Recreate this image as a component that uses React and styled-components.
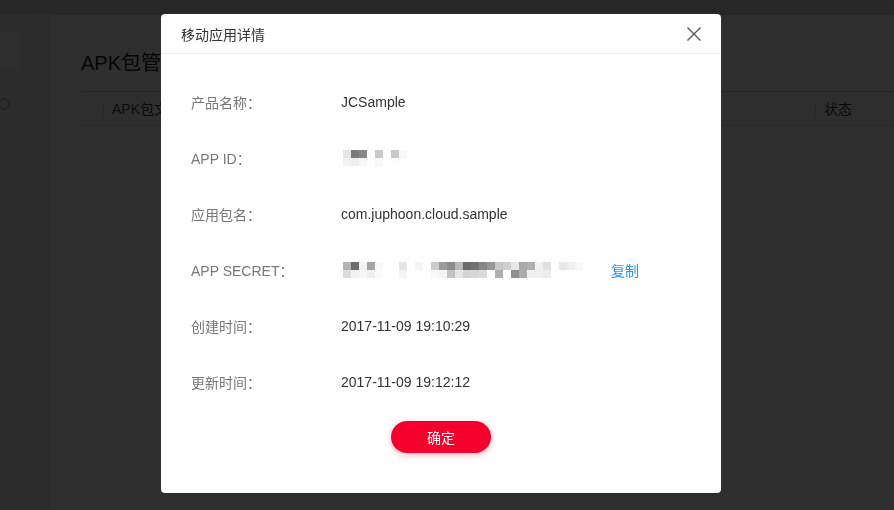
import React from "react";
import styled, { createGlobalStyle } from "styled-components";

const GlobalStyle = createGlobalStyle`
  html, body {
    margin: 0;
    padding: 0;
    background: #fff;
    font-family: "Liberation Sans", "Noto Sans CJK SC", sans-serif;
  }
`;

const Page = styled.div`
  width: 894px;
  height: 510px;
  display: flex;
  flex-direction: column;
  overflow: hidden;
`;

const TopBar = styled.div`
  height: 15px;
  background: #d6d6d6;
`;

const Main = styled.div`
  flex: 1;
  display: flex;
`;

const Sidebar = styled.div`
  width: 31px;
  background: #f4f4f4;
  padding-top: 17px;
  display: flex;
  flex-direction: column;
  gap: 28px;
`;

const SideBox = styled.div`
  width: 20px;
  height: 38px;
  background: #fdfdfd;
  border-radius: 0 3px 3px 0;
`;

const SideIcon = styled.div`
  width: 8px;
  height: 8px;
  margin-left: -2px;
  border: 2px solid #c8c8c8;
  border-radius: 50%;
`;

const Gutter = styled.div`
  width: 20px;
  background: #ebebeb;
`;

const Card = styled.div`
  flex: 1;
  margin-top: 2px;
  background: #fff;
  padding: 36px 0 0 30px;
`;

const Title = styled.h1`
  margin: 0 0 18px;
  font-size: 20px;
  font-weight: normal;
  color: #222;
  line-height: 20px;
`;

const TableHead = styled.div`
  height: 33px;
  border-top: 1px solid #cfcfcf;
  border-bottom: 1px solid #e4e4e4;
  display: flex;
  align-items: center;
  font-size: 14px;
  color: #444;
`;

const HeadCell = styled.div`
  flex: ${(p) => (p.$grow ? 1 : "none")};
  width: ${(p) => p.$width || "auto"};
  padding-left: 8px;
  border-left: 1px solid #ddd;
  margin-left: ${(p) => p.$offset || "0"};
  line-height: 14px;
`;

const Overlay = styled.div`
  position: fixed;
  inset: 0;
  background: rgba(0, 0, 0, 0.82);
  padding: 14px 0 0 161px;
`;

const Modal = styled.div`
  width: 560px;
  background: #fff;
  border-radius: 4px;
  overflow: hidden;
`;

const Header = styled.div`
  height: 39px;
  border-bottom: 1px solid #ececec;
  display: flex;
  align-items: center;
  justify-content: space-between;
  padding: 0 20px;
`;

const HeaderTitle = styled.div`
  font-size: 14px;
  color: #333;
`;

const CloseButton = styled.button`
  border: none;
  background: none;
  padding: 0;
  margin-right: -1px;
  width: 16px;
  height: 16px;
  display: flex;
  cursor: pointer;
`;

const Body = styled.div`
  padding: 20px 30px 40px;
  display: flex;
  flex-direction: column;
`;

const Row = styled.div`
  height: 56px;
  display: flex;
  align-items: center;
  font-size: 14px;
`;

const Label = styled.div`
  width: 150px;
  color: #777;
`;

const Value = styled.div`
  color: #333;
  display: flex;
  align-items: center;
`;

const CopyLink = styled.a`
  margin-left: 28px;
  color: #1c9af2;
  cursor: pointer;
`;

const Footer = styled.div`
  margin-top: 11px;
  display: flex;
  justify-content: center;
`;

const ConfirmButton = styled.button`
  width: 100px;
  height: 32px;
  border: none;
  border-radius: 16px;
  background: #f5002c;
  color: #fff;
  font-family: inherit;
  font-size: 14px;
  box-shadow: 0 2px 6px rgba(245, 0, 44, 0.3);
  cursor: pointer;
`;

const idCells = [
  ["#e6e6e6", "#7a7a7a", "#888888", "#fff", "#c8c8c8", "#fff", "#c8c8c8", "#f8f8f8"],
  ["#f2f2f2", "#eeeeee", "#f6f6f6", "#fff", "#f8f8f8", "#fff", "#fdfdfd", "#fff"],
];

const secretCells = [
  [
    "#b4b4b4", "#6e6e6e", "#f2f2f2", "#a4a4a4", "#f8f8f8", "#fff", "#fff", "#e6e6e6",
    "#fff", "#f4f4f4", "#fff", "#cccccc", "#9c9c9c", "#8c8c8c", "#b8b8b8", "#6a6a6a",
    "#727272", "#888888", "#969696", "#c8c8c8", "#d0d0d0", "#e8e8e8", "#aaaaaa", "#b0b0b0",
    "#f0f0f0", "#e0e0e0", "#fff", "#e8e8e8", "#eeeeee", "#f8f8f8",
  ],
  [
    "#dcdcdc", "#f2f2f2", "#f8f8f8", "#eeeeee", "#fafafa", "#fff", "#fff", "#f4f4f4",
    "#fff", "#fff", "#fff", "#f8f8f8", "#f4f4f4", "#c4c4c4", "#e6e6e6", "#d4d4d4",
    "#d8d8d8", "#dcdcdc", "#fff", "#b0b0b0", "#fff", "#909090", "#acacac", "#f0f0f0",
    "#f0f0f0", "#ececec", "#fff", "#fff", "#fff", "#fff",
  ],
];

const Mosaic = ({ cells, size = 8 }) => (
  <svg
    width={cells[0].length * size}
    height={cells.length * size}
    style={{ display: "block", marginLeft: 2 }}
  >
    {cells.map((row, y) =>
      row.map((c, x) => (
        <rect key={`${x}-${y}`} x={x * size} y={y * size} width={size} height={size} fill={c} />
      ))
    )}
  </svg>
);

const CloseIcon = () => (
  <svg width="16" height="16" viewBox="0 0 16 16">
    <path d="M1.5 1.5 L14.5 14.5 M14.5 1.5 L1.5 14.5" stroke="#555" strokeWidth="1.3" fill="none" />
  </svg>
);

const details = [
  { label: "产品名称：", value: "JCSample" },
  { label: "APP ID：", mosaic: idCells },
  { label: "应用包名：", value: "com.juphoon.cloud.sample" },
  { label: "APP SECRET：", mosaic: secretCells, copy: true },
  { label: "创建时间：", value: "2017-11-09 19:10:29" },
  { label: "更新时间：", value: "2017-11-09 19:12:12" },
];

export default function App() {
  return (
    <>
      <GlobalStyle />
      <Page>
        <TopBar />
        <Main>
          <Sidebar>
            <SideBox />
            <SideIcon />
          </Sidebar>
          <Gutter />
          <Card>
            <Title>APK包管理</Title>
            <TableHead>
              <HeadCell $grow $offset="22px">APK包文件</HeadCell>
              <HeadCell $width="70px">状态</HeadCell>
            </TableHead>
          </Card>
        </Main>
      </Page>
      <Overlay>
        <Modal>
          <Header>
            <HeaderTitle>移动应用详情</HeaderTitle>
            <CloseButton aria-label="关闭">
              <CloseIcon />
            </CloseButton>
          </Header>
          <Body>
            {details.map((d) => (
              <Row key={d.label}>
                <Label>{d.label}</Label>
                <Value>
                  {d.mosaic ? <Mosaic cells={d.mosaic} /> : d.value}
                  {d.copy && <CopyLink>复制</CopyLink>}
                </Value>
              </Row>
            ))}
            <Footer>
              <ConfirmButton>确定</ConfirmButton>
            </Footer>
          </Body>
        </Modal>
      </Overlay>
    </>
  );
}
